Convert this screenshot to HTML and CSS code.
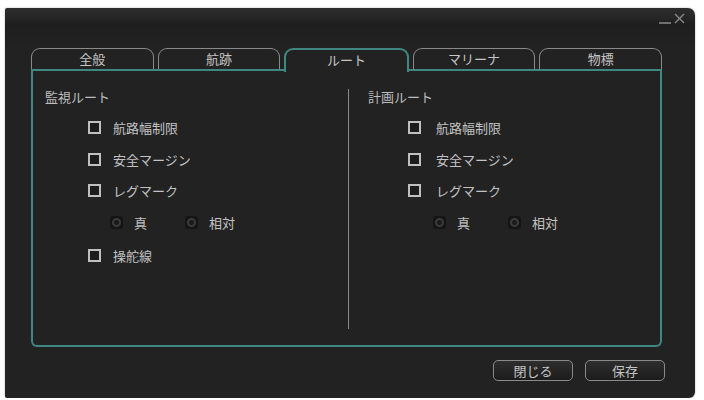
FILE: index.html
```html
<!DOCTYPE html>
<html>
<head>
    <title>ルート設定</title>
    <meta charset="utf-8" />
    <link rel="stylesheet" href="styles.css">
</head>
<body>
    <div class="window">
        <div class="titlebar">
            <svg class="winbtns" width="32" height="14" viewBox="0 0 32 14">
                <line x1="2" y1="12" x2="14" y2="12" stroke="#8c8c8c" stroke-width="1.5" />
                <line x1="18" y1="3" x2="27" y2="12" stroke="#8c8c8c" stroke-width="1.3" />
                <line x1="27" y1="3" x2="18" y2="12" stroke="#8c8c8c" stroke-width="1.3" />
            </svg>
        </div>

        <div class="tabs">
            <div class="tab">全般</div>
            <div class="tab">航跡</div>
            <div class="tab active">ルート</div>
            <div class="tab">マリーナ</div>
            <div class="tab">物標</div>
        </div>

        <div class="panel">
            <div class="col left">
                <p class="head">監視ルート</p>
                <div class="opts">
                    <div class="row"><span class="chk"></span>航路幅制限</div>
                    <div class="row"><span class="chk"></span>安全マージン</div>
                    <div class="row"><span class="chk"></span>レグマーク</div>
                    <div class="row radios">
                        <span class="rad"></span><span class="rlabel">真</span>
                        <span class="rad"></span><span class="rlabel">相対</span>
                    </div>
                    <div class="row"><span class="chk"></span>操舵線</div>
                </div>
            </div>
            <div class="col right">
                <p class="head">計画ルート</p>
                <div class="opts">
                    <div class="row"><span class="chk"></span>航路幅制限</div>
                    <div class="row"><span class="chk"></span>安全マージン</div>
                    <div class="row"><span class="chk"></span>レグマーク</div>
                    <div class="row radios">
                        <span class="rad"></span><span class="rlabel">真</span>
                        <span class="rad"></span><span class="rlabel">相対</span>
                    </div>
                </div>
            </div>
        </div>

        <div class="buttons">
            <button class="btn">閉じる</button>
            <button class="btn">保存</button>
        </div>
    </div>
</body>
</html>
```

FILE: styles.css
```css
html, body {
    padding: 0;
}

body {
    margin: 0;
    background-color: #ffffff;
    font-family: "Noto Sans CJK JP", "Noto Sans", sans-serif;
    font-size: 13px;
    color: #c4c4c4;
}

.window {
    margin: 8px 0 0 5px;
    width: 690px;
    height: 390px;
    background: linear-gradient(#2d2d2d 0, #262626 10px, #1e1e1e 16px, #222222 40px);
    border-radius: 2px 7px 6px 2px;
    box-shadow: 0 0 2px rgba(0, 0, 0, 0.35);
    overflow: hidden;
}

.titlebar {
    height: 40px;
    display: flex;
    justify-content: flex-end;
    align-items: flex-start;
    padding-right: 6px;
}

.winbtns {
    margin-top: 3px;
}

.tabs {
    display: flex;
    gap: 4px;
    margin-left: 26px;
    width: 631px;
    border-bottom: 2px solid #3f8780;
    height: 21px;
}

.tab {
    width: 123px;
    height: 20px;
    border: 1px solid #8a8a8a;
    border-bottom: none;
    border-radius: 9px 9px 0 0;
    text-align: center;
    line-height: 20px;
    color: #c6c6c6;
}

.tab.active {
    height: 22px;
    border: 2px solid #3f8780;
    border-bottom: none;
    background-color: #222222;
    margin-bottom: -2px;
    line-height: 20px;
    z-index: 1;
}

.panel {
    margin-left: 26px;
    width: 627px;
    height: 274px;
    border: 2px solid #3f8780;
    border-top: none;
    border-radius: 0 0 6px 6px;
    display: grid;
    grid-template-columns: 315px 1fr;
}

.col {
    padding-top: 18px;
}

.left {
    padding-left: 12px;
}

.right {
    border-left: 1px solid #8a8a8a;
    margin: 18px 0 16px 0;
    padding-top: 0;
    padding-left: 19px;
}

.head {
    margin: 0;
    height: 16px;
    line-height: 16px;
    color: #bcbcbc;
}

.opts {
    margin-top: 7px;
    padding-left: 43px;
}

.right .opts {
    padding-left: 40px;
}

.row {
    display: flex;
    align-items: center;
    height: 31.5px;
    color: #c2c2c2;
}

.chk {
    width: 9px;
    height: 9px;
    border: 2px solid #c0c0c0;
    background-color: #1c1c1c;
    margin-right: 12px;
}

.right .chk {
    margin-right: 15px;
}

.radios {
    padding-left: 22px;
    margin-bottom: 2px;
}

.right .radios {
    padding-left: 25px;
}

.rad {
    width: 13px;
    height: 13px;
    border-radius: 3px;
    background: radial-gradient(circle, #1a1a1a 0, #1a1a1a 2px, #3a3a3a 3px, #3a3a3a 4px, #151515 5px);
    margin-right: 11px;
}

.rlabel {
    width: 51px;
}

.buttons {
    display: flex;
    justify-content: flex-end;
    gap: 12px;
    margin-top: 13px;
    padding-right: 30px;
}

.btn {
    width: 80px;
    height: 21px;
    border: 1px solid #8a8a8a;
    border-radius: 5px;
    background: linear-gradient(#2e2e2e, #1c1c1c);
    color: #c4c4c4;
    font-family: "Noto Sans CJK JP", "Noto Sans", sans-serif;
    font-size: 13px;
    padding: 0;
    line-height: 18px;
}
```
